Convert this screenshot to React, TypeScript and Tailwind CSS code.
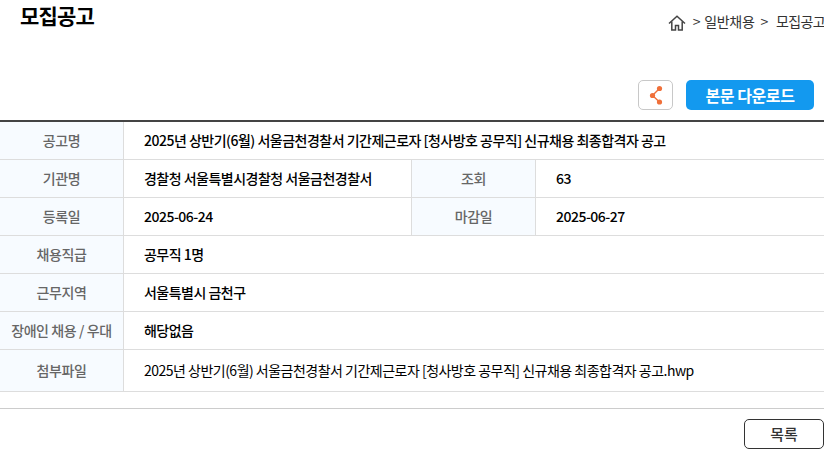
const font = "font-['Noto_Sans_CJK_KR','Noto_Sans',sans-serif]"

function Label({ children }: { children: React.ReactNode }) {
  return (
    <div className="flex w-[124px] shrink-0 items-center justify-center border-r border-[#dddddd] bg-[#f7fbff] text-[14px] font-medium tracking-[-0.4px] text-[#666666]">
      {children}
    </div>
  )
}

function Value({ children, className = "" }: { children: React.ReactNode; className?: string }) {
  return (
    <div className={`flex items-center pl-[20px] text-[14px] font-medium tracking-[-0.51px] text-black ${className}`}>
      {children}
    </div>
  )
}

function Row({ children, h = "h-[38px]" }: { children: React.ReactNode; h?: string }) {
  return <div className={`flex border-b border-[#dddddd] ${h}`}>{children}</div>
}

export default function App() {
  return (
    <div className={`h-[449px] w-[824px] overflow-hidden bg-white ${font}`}>
      <div className="flex h-[80px] justify-between">
        <h1 className="pl-[20px] text-[21px] leading-[30px] font-bold tracking-[-0.8px] text-black">모집공고</h1>
        <div className="flex h-[42px] items-center whitespace-nowrap text-[14px] tracking-[-0.3px] text-[#333333]">
          <svg width="18" height="18" viewBox="0 0 18 18" fill="none" stroke="#444444" strokeWidth="1.5" className="mt-[3px]">
            <path d="M1 9.5 9 2.2l8 7.3" />
            <path d="M3.8 7.6V16h3.7v-4.5h3V16h3.7V7.6" />
          </svg>
          <span className="ml-[7px]">&gt;</span>
          <span className="ml-[4px]">일반채용</span>
          <span className="ml-[6px]">&gt;</span>
          <span className="ml-[8px] w-[48px] tracking-[-0.6px]">모집공고</span>
        </div>
      </div>

      <div className="flex h-[40px] items-start justify-end gap-[13px] pr-[10px]">
        <button className="flex h-[30px] w-[35px] items-center justify-center rounded-[5px] border border-[#c8c8c8] bg-white">
          <svg width="16" height="22" viewBox="0 0 16 22" fill="none">
            <path d="M11.5 4.5 4.5 11.5l7 6.5" stroke="#f0703a" strokeWidth="1.4" />
            <circle cx="11.5" cy="4.5" r="2.6" fill="#f0703a" />
            <circle cx="4.5" cy="11.5" r="2.6" fill="#f0703a" />
            <circle cx="11.5" cy="18" r="2.6" fill="#f0703a" />
          </svg>
        </button>
        <button className="h-[30px] w-[128px] rounded-[5px] bg-[#1399ef] text-[16px] font-bold tracking-[-0.45px] text-white">
          본문 다운로드
        </button>
      </div>

      <div className="border-t-2 border-[#444444]">
        <Row>
          <Label>공고명</Label>
          <Value>2025년 상반기(6월) 서울금천경찰서 기간제근로자 [청사방호 공무직] 신규채용 최종합격자 공고</Value>
        </Row>
        <Row>
          <Label>기관명</Label>
          <Value className="w-[288px] border-r border-[#dddddd]">경찰청 서울특별시경찰청 서울금천경찰서</Value>
          <Label>조회</Label>
          <Value>63</Value>
        </Row>
        <Row>
          <Label>등록일</Label>
          <Value className="w-[288px] border-r border-[#dddddd]">2025-06-24</Value>
          <Label>마감일</Label>
          <Value>2025-06-27</Value>
        </Row>
        <Row>
          <Label>채용직급</Label>
          <Value>공무직 1명</Value>
        </Row>
        <Row>
          <Label>근무지역</Label>
          <Value>서울특별시 금천구</Value>
        </Row>
        <Row>
          <Label>장애인 채용 / 우대</Label>
          <Value>해당없음</Value>
        </Row>
        <Row h="h-[42px]">
          <Label>첨부파일</Label>
          <Value className="font-normal text-[#333333]">2025년 상반기(6월) 서울금천경찰서 기간제근로자 [청사방호 공무직] 신규채용 최종합격자 공고.hwp</Value>
        </Row>
      </div>

      <div className="mt-[16px] flex justify-end border-t border-[#cccccc] pt-[10px]">
        <button className="h-[30px] w-[80px] rounded-[5px] border border-[#333333] bg-white text-[15px] font-medium text-[#333333]">
          목록
        </button>
      </div>
    </div>
  )
}
